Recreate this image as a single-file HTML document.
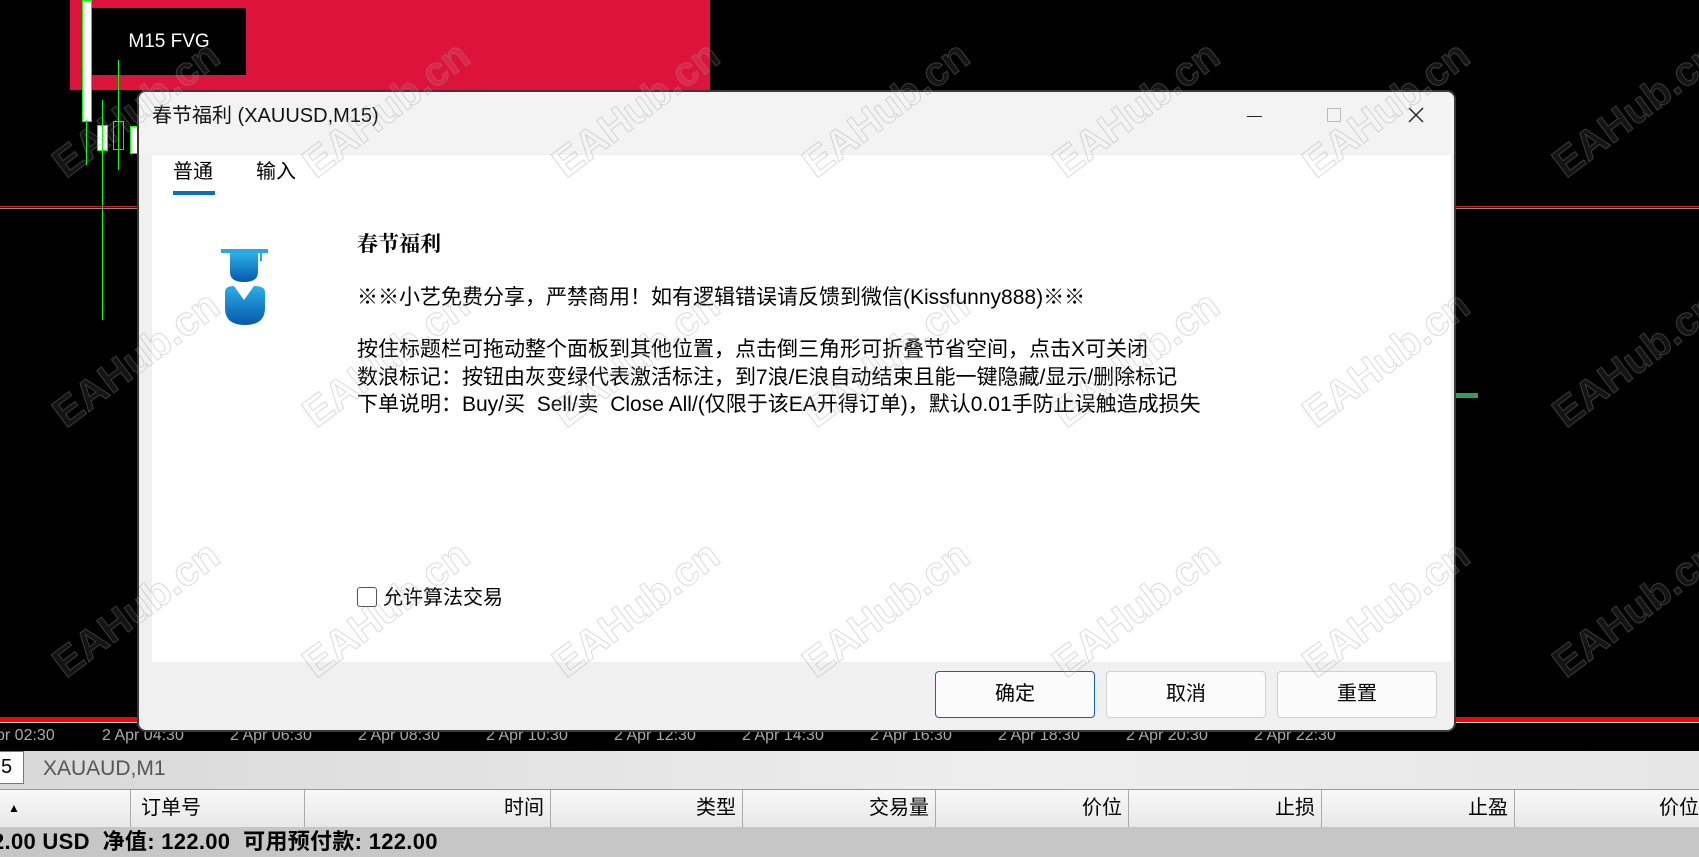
<!DOCTYPE html>
<html><head><meta charset="utf-8"><style>
*{margin:0;padding:0;box-sizing:border-box}
body{width:1699px;height:857px;background:#000;position:relative;overflow:hidden;font-family:"Liberation Sans","Noto Sans CJK SC",sans-serif}
.a{position:absolute}
.wm{position:absolute;font:bold 41px "Liberation Sans",sans-serif;color:rgba(255,255,255,0.08);-webkit-text-stroke:1px rgba(150,150,150,0.35);transform:rotate(-37deg);transform-origin:left bottom;white-space:nowrap;z-index:50;pointer-events:none}
.btn{position:absolute;top:668px;width:160px;height:47px;background:#fbfbfb;border:1px solid #d0d0d0;border-radius:4px;font-size:20px;text-align:center;line-height:45px;color:#000}
.txt{position:absolute;left:357px;font-size:21px;color:#000;white-space:nowrap}
.col{position:absolute;top:790px;height:37px;border-left:1px solid #aaa;font-size:20px;line-height:37px;text-align:right;padding-right:6px}
.tl{position:absolute;top:727px;font-size:16px;color:#aaa;white-space:nowrap}
</style></head><body>
<!-- chart -->
<div class="a" style="left:70px;top:0;width:640px;height:90px;background:#dc143c"></div>
<div class="a" style="left:92px;top:8px;width:154px;height:67px;background:#000;color:#fff;font-size:19px;line-height:67px;text-align:center">M15 FVG</div>
<div class="a" style="left:82px;top:0;width:10px;height:122px;background:#fff;border:1px solid #0f0"></div>
<div class="a" style="left:86px;top:120px;width:1px;height:45px;background:#0f0"></div>
<div class="a" style="left:97px;top:125px;width:11px;height:26px;background:#fff;border:1px solid #0f0"></div>
<div class="a" style="left:102px;top:100px;width:1px;height:220px;background:#0f0"></div>
<div class="a" style="left:113px;top:121px;width:11px;height:29px;border:1px solid #0f0"></div>
<div class="a" style="left:118px;top:60px;width:1px;height:110px;background:#0f0"></div>
<div class="a" style="left:130px;top:126px;width:10px;height:28px;background:#fff;border:1px solid #0f0"></div>
<div class="a" style="left:0;top:206px;width:1699px;height:1px;background:#c22"></div>
<div class="a" style="left:0;top:208px;width:1699px;height:1px;background:#888"></div>
<div class="a" style="left:1455px;top:393px;width:23px;height:5px;background:#2e9e62"></div>
<div class="a" style="left:0;top:717px;width:1699px;height:5px;background:#f00"></div>
<div class="a" style="left:0;top:722px;width:1699px;height:1px;background:#ddd"></div>
<div class="tl" style="left:-4px">pr 02:30</div>
<div class="tl" style="left:102px">2 Apr 04:30</div>
<div class="tl" style="left:230px">2 Apr 06:30</div>
<div class="tl" style="left:358px">2 Apr 08:30</div>
<div class="tl" style="left:486px">2 Apr 10:30</div>
<div class="tl" style="left:614px">2 Apr 12:30</div>
<div class="tl" style="left:742px">2 Apr 14:30</div>
<div class="tl" style="left:870px">2 Apr 16:30</div>
<div class="tl" style="left:998px">2 Apr 18:30</div>
<div class="tl" style="left:1126px">2 Apr 20:30</div>
<div class="tl" style="left:1254px">2 Apr 22:30</div>
<!-- bottom panel -->
<div class="a" style="left:0;top:751px;width:1699px;height:39px;background:linear-gradient(90deg,#d8d8d8,#eee 60%,#e6e6e6);border-bottom:1px solid #999"></div>
<div class="a" style="left:-2px;top:751px;width:26px;height:33px;background:#fff;border:1px solid #777;font-size:20px;line-height:31px;padding-left:2px">5</div>
<div class="a" style="left:43px;top:751px;font-size:21px;line-height:36px;color:#555">XAUAUD,M1</div>
<div class="a" style="left:0;top:790px;width:1699px;height:37px;background:linear-gradient(180deg,#f8f8f8,#e8e8e8)"></div>
<div class="a" style="left:8px;top:790px;font-size:12px;line-height:37px">▲</div>
<div class="col" style="left:130px;width:174px;text-align:left;padding-left:10px">订单号</div>
<div class="col" style="left:304px;width:246px">时间</div>
<div class="col" style="left:550px;width:192px">类型</div>
<div class="col" style="left:742px;width:193px">交易量</div>
<div class="col" style="left:935px;width:193px">价位</div>
<div class="col" style="left:1128px;width:193px">止损</div>
<div class="col" style="left:1321px;width:193px">止盈</div>
<div class="col" style="left:1514px;width:185px;padding-right:0">价位</div>
<div class="a" style="left:0;top:827px;width:1699px;height:30px;background:#c6c6c6;font-weight:bold;font-size:22px;line-height:30px;white-space:nowrap;text-indent:-8px;letter-spacing:0.3px">2.00 USD&nbsp; 净值: 122.00&nbsp; 可用预付款: 122.00</div>
<!-- dialog -->
<div class="a" style="left:137px;top:90px;width:1319px;height:642px;background:#f0f0f0;border:2px solid #3a3a3a;border-radius:9px;overflow:hidden">
 <div class="a" style="left:0;top:0;width:100%;height:62px;background:#f3f3f3"></div>
 <div class="a" style="left:13px;top:7px;font-size:20px;color:#111">春节福利 (XAUUSD,M15)</div>
 <div class="a" style="left:1108px;top:24px;width:15px;height:1px;background:#222"></div>
 <div class="a" style="left:1188px;top:16px;width:14px;height:14px;border:1px solid #bbb"></div>
 <svg class="a" style="left:1269px;top:15px" width="16" height="16"><path d="M1 1L15 15M15 1L1 15" stroke="#222" stroke-width="1.4"/></svg>
 <div class="a" style="left:13px;top:63px;width:1299px;height:507px;background:#fff"></div>
 <div class="a" style="left:34px;top:63px;font-size:20px">普通</div>
 <div class="a" style="left:34px;top:99px;width:42px;height:4px;background:#0a6fc9"></div>
 <div class="a" style="left:117px;top:63px;font-size:20px">输入</div>
 <svg class="a" style="left:81px;top:156px" width="50" height="80" viewBox="0 0 50 80">
  <defs><linearGradient id="g" x1="0" y1="0" x2="0" y2="1"><stop offset="0" stop-color="#2bb0ea"/><stop offset="1" stop-color="#0757a8"/></linearGradient></defs>
  <rect x="1" y="1" width="47" height="4" fill="#29a8e6"/>
  <path d="M10 5H38V24Q38 34 24 34Q10 34 10 24Z" fill="url(#g)"/>
  <rect x="40" y="5" width="2" height="8" fill="#29a8e6"/>
  <path d="M5 44Q5 38 14 38L24 52L34 38Q45 38 45 44V60Q45 77 25 77Q5 77 5 60Z" fill="url(#g)"/>
 </svg>
 <div class="txt" style="left:218px;top:136px;font-family:'Liberation Serif','Noto Serif CJK SC',serif;font-weight:bold">春节福利</div>
 <div class="txt" style="left:218px;top:189px">※※小艺免费分享，严禁商用！如有逻辑错误请反馈到微信(Kissfunny888)※※</div>
 <div class="txt" style="left:218px;top:241px">按住标题栏可拖动整个面板到其他位置，点击倒三角形可折叠节省空间，点击X可关闭</div>
 <div class="txt" style="left:218px;top:269px">数浪标记：按钮由灰变绿代表激活标注，到7浪/E浪自动结束且能一键隐藏/显示/删除标记</div>
 <div class="txt" style="left:218px;top:296px">下单说明：Buy/买&nbsp; Sell/卖&nbsp; Close All/(仅限于该EA开得订单)，默认0.01手防止误触造成损失</div>
 <div class="a" style="left:218px;top:495px;width:20px;height:20px;border:1px solid #555;border-radius:3px;background:#fff"></div>
 <div class="txt" style="left:244px;top:489px;font-size:20px">允许算法交易</div>
 <div class="btn" style="left:796px;top:579px;border:1px solid #0a64b8">确定</div>
 <div class="btn" style="left:967px;top:579px">取消</div>
 <div class="btn" style="left:1138px;top:579px">重置</div>
</div>
<!-- watermarks -->
<div class="wm" style="left:72px;top:140px">EAHub.cn</div>
<div class="wm" style="left:322px;top:140px">EAHub.cn</div>
<div class="wm" style="left:572px;top:140px">EAHub.cn</div>
<div class="wm" style="left:822px;top:140px">EAHub.cn</div>
<div class="wm" style="left:1072px;top:140px">EAHub.cn</div>
<div class="wm" style="left:1322px;top:140px">EAHub.cn</div>
<div class="wm" style="left:1572px;top:140px">EAHub.cn</div>
<div class="wm" style="left:72px;top:390px">EAHub.cn</div>
<div class="wm" style="left:322px;top:390px">EAHub.cn</div>
<div class="wm" style="left:572px;top:390px">EAHub.cn</div>
<div class="wm" style="left:822px;top:390px">EAHub.cn</div>
<div class="wm" style="left:1072px;top:390px">EAHub.cn</div>
<div class="wm" style="left:1322px;top:390px">EAHub.cn</div>
<div class="wm" style="left:1572px;top:390px">EAHub.cn</div>
<div class="wm" style="left:72px;top:640px">EAHub.cn</div>
<div class="wm" style="left:322px;top:640px">EAHub.cn</div>
<div class="wm" style="left:572px;top:640px">EAHub.cn</div>
<div class="wm" style="left:822px;top:640px">EAHub.cn</div>
<div class="wm" style="left:1072px;top:640px">EAHub.cn</div>
<div class="wm" style="left:1322px;top:640px">EAHub.cn</div>
<div class="wm" style="left:1572px;top:640px">EAHub.cn</div>
</body></html>
